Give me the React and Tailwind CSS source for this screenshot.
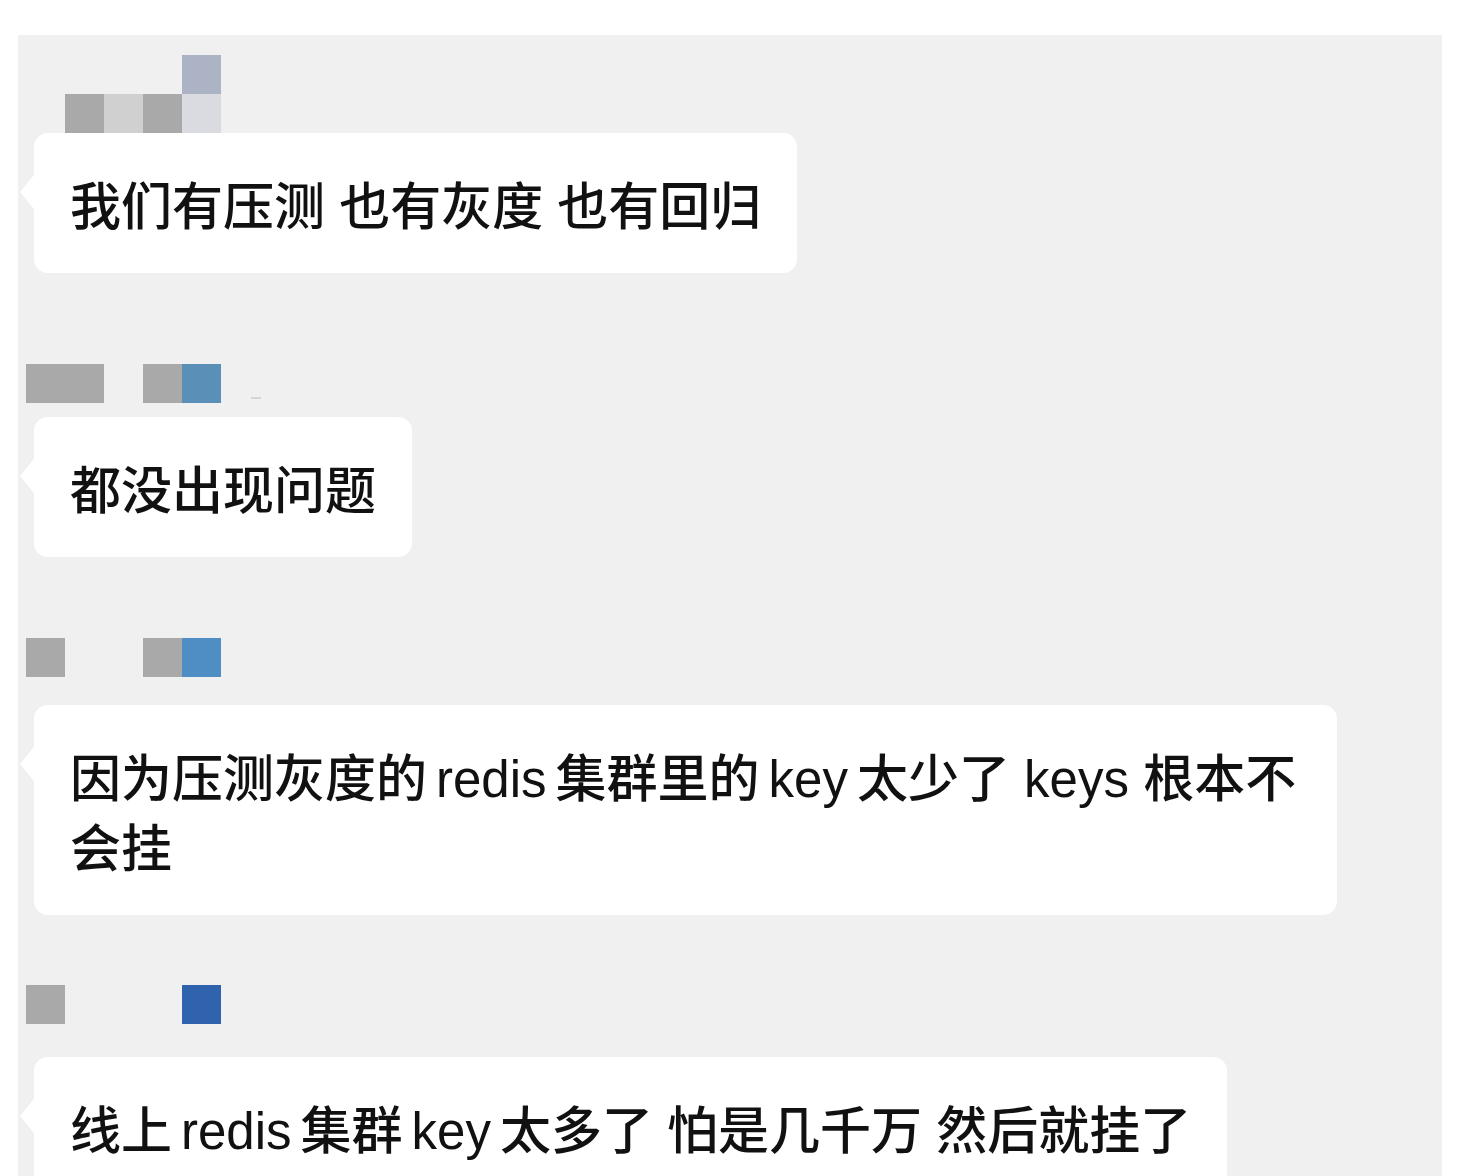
import React from "react";

const cells = {
  g: "bg-[#a9a9a9]",
  l: "bg-[#d0d0d0]",
  s: "bg-[#abb3c5]",
  p: "bg-[#dadbe0]",
  b1: "bg-[#5a8fb8]",
  b2: "bg-[#4f8ec4]",
  b3: "bg-[#2f63ad]",
  _: "bg-transparent",
};

// mosaic name blocks (names are blurred out in the picture)
const Mosaic = ({ rows }) => (
  <div className="flex flex-col">
    {rows.map((row, i) => (
      <div key={i} className="flex">
        {row.map((c, j) => (
          <div key={j} className={`w-[39px] h-[39px] ${cells[c]}`}></div>
        ))}
      </div>
    ))}
  </div>
);

const Bubble = ({ children, className = "" }) => (
  <div
    className={`relative bg-white rounded-[14px] px-[36px] pt-[40px] pb-[30px] text-[51px] leading-[70px] font-medium text-[#111111] w-fit ${className}`}
  >
    <div className="absolute left-[-14px] top-[42px] w-0 h-0 border-y-[17px] border-y-transparent border-r-[14px] border-r-white"></div>
    {children}
  </div>
);

// latin words sit a bit apart from the CJK around them
const W = ({ children }) => <span className="mx-[9px]">{children}</span>;

export default function App() {
  return (
    <div
      className="bg-white h-[1176px] pt-[35px] pl-[18px] overflow-hidden"
      style={{ fontFamily: '"Liberation Sans", "Noto Sans CJK SC", sans-serif' }}
    >
      <div className="w-[1424px] h-[1141px] bg-[#f0f0f0] pl-[8px] pt-[20px] overflow-hidden">
        {/* message 1 */}
        <div className="ml-[39px]">
          <Mosaic
            rows={[
              ["_", "_", "_", "s"],
              ["g", "l", "g", "p"],
            ]}
          />
        </div>
        <Bubble className="ml-[8px]">我们有压测 也有灰度 也有回归</Bubble>

        {/* message 2 */}
        <div className="mt-[91px] flex items-end gap-[30px]">
          <Mosaic rows={[["g", "g", "_", "g", "b1"]]} />
          <div className="w-[10px] h-[2px] bg-[#d6d6d6] mb-[4px]"></div>
        </div>
        <Bubble className="ml-[8px] mt-[14px]">都没出现问题</Bubble>

        {/* message 3 */}
        <div className="mt-[81px]">
          <Mosaic rows={[["g", "_", "_", "g", "b2"]]} />
        </div>
        <Bubble className="ml-[8px] mt-[28px] max-w-[1303px]">
          因为压测灰度的<W>redis</W>集群里的<W>key</W>太少了 keys 根本不会挂
        </Bubble>

        {/* message 4 */}
        <div className="mt-[70px]">
          <Mosaic rows={[["g", "_", "_", "_", "b3"]]} />
        </div>
        <Bubble className="ml-[8px] mt-[33px]">
          线上<W>redis</W>集群<W>key</W>太多了 怕是几千万 然后就挂了
        </Bubble>
      </div>
    </div>
  );
}
